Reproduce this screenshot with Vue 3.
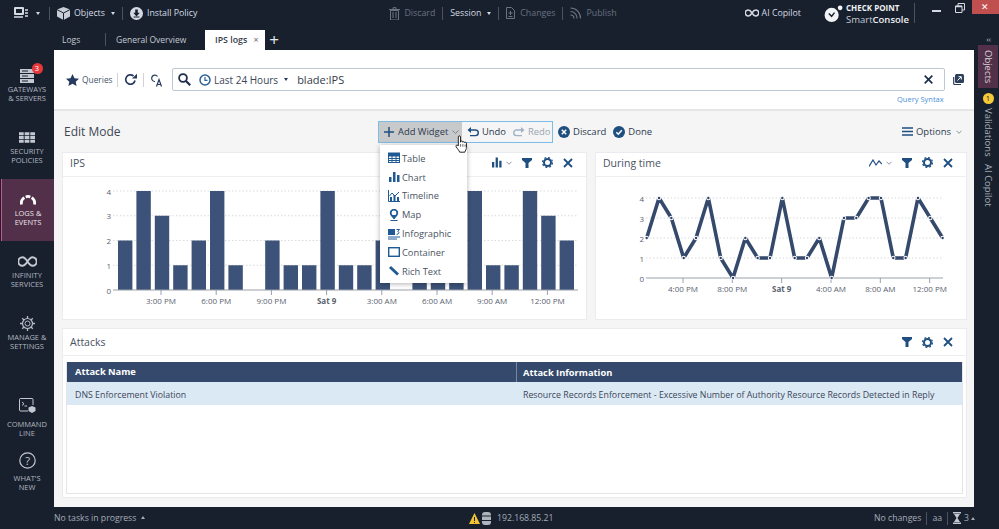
<template>
  <div class="app">
    <header class="topbar">
      <div class="top-group app-menu">
        <svg width="14" height="12" viewBox="0 0 14 12"><rect x="0" y="0" width="10" height="8" rx="1" fill="#d5dae2" /><rect x="2" y="2" width="6" height="4" fill="#18202e" /><path d="M0 10h9M11 3h3M11 6h3M11 9h3" stroke="#d5dae2" stroke-width="1.6" /></svg>
        <span class="caret"></span>
      </div>
      <i class="sep"></i>
      <div class="top-group">
        <svg width="13" height="13" viewBox="0 0 13 13"><path d="M6.5 0 13 2.6v7L6.5 13 0 9.6v-7z" fill="#c9ced6" /><path d="M0 2.6 6.5 6 13 2.6M6.5 6v7" stroke="#18202e" stroke-width="1" fill="none" /></svg>
        <span>Objects</span>
        <span class="caret"></span>
      </div>
      <i class="sep"></i>
      <div class="top-group">
        <svg width="13" height="13" viewBox="0 0 13 13"><circle cx="6.5" cy="6.5" r="6.5" fill="#d5dae2" /><path d="M5.2 2.5h2.6v3.2h2L6.5 9.4 3.2 5.7h2z" fill="#18202e" /><path d="M3.5 10h6" stroke="#18202e" /></svg>
        <span>Install Policy</span>
      </div>

      <div class="top-group muted discard-top">
        <svg width="11" height="13" viewBox="0 0 11 13"><path d="M0 2.5h11M4 2V.7h3V2M1.5 3.5h8V13h-8zM4 5v6M7 5v6" stroke="#6b7280" fill="none" /></svg>
        <span>Discard</span>
      </div>
      <i class="sep"></i>
      <div class="top-group session">
        <span>Session</span>
        <span class="caret"></span>
      </div>
      <i class="sep"></i>
      <div class="top-group muted">
        <svg width="9" height="12" viewBox="0 0 9 12"><path d="M.5.5h5l3 3v8h-8z" fill="none" stroke="#6b7280" /><path d="M2.5 6h4M4.5 4v4M2.5 9.500h4" stroke="#6b7280" /></svg>
        <span>Changes</span>
      </div>
      <i class="sep"></i>
      <div class="top-group muted">
        <svg width="11" height="12" viewBox="0 0 11 12"><path d="M.5 1a10 10 0 0 1 10 10.500M.5 4.500a6.500 6.500 0 0 1 6.500 7M.5 8a3.500 3.500 0 0 1 3.500 3.500" stroke="#6b7280" stroke-width="1.200" fill="none" /></svg>
        <span>Publish</span>
      </div>

      <div class="top-group copilot">
        <svg width="14" height="8" viewBox="0 0 14 8"><path d="M7 4C5.500 1.500 4.500 1 3.300 1a3 3 0 0 0 0 6C4.500 7 5.500 6.500 7 4c1.500-2.500 2.500-3 3.700-3a3 3 0 0 1 0 6C9.500 7 8.500 6.500 7 4z" fill="none" stroke="#d5dae2" stroke-width="1.500" /></svg>
        <span>AI Copilot</span>
      </div>
      <div class="brand">
        <svg width="20" height="17" viewBox="0 0 21 18"><circle cx="8" cy="10.500" r="7.500" fill="#f2f3f5" /><circle cx="17" cy="3" r="2.500" fill="#f2f3f5" /><path d="M5 9l3 3 3-4" stroke="#18202e" stroke-width="1.500" fill="none" /></svg>
        <div class="brand-text">
          <span class="brand-top">CHECK POINT</span>
          <span class="brand-bot">Smart<b>Console</b></span>
        </div>
      </div>
      <i class="sep brand-sep"></i>
      <div class="win-btns">
        <i class="win-min"></i>
        <svg width="10" height="10" viewBox="0 0 10 10"><path d="M.5 3h6.500v6.500H.5zM3 3V.5h6.500V7H7" fill="none" stroke="#d5dae2" /><path d="M.5 3.500h6.500" stroke="#d5dae2" stroke-width="1.500" /></svg>
        <div class="win-close">✕</div>
      </div>
    </header>

    <div class="tabs">
      <span class="tab tab-logs">Logs</span>
      <i class="sep tab-sep"></i>
      <span class="tab tab-overview">General Overview</span>
      <div class="tab-active">IPS logs <span class="tab-x">×</span></div>
      <span class="tab-plus">+</span>
      <span class="collapse">‹‹</span>
    </div>

    <div class="middle">
      <nav class="sidenav">
        <div
          v-for="item in navItems"
          :key="item.label1"
          class="nav-item"
          :class="[item.cls, { active: item.active }]"
        >
          <div class="nav-icon">
            <svg v-if="item.icon === 'gw'" width="14" height="14" viewBox="0 0 14 14"><rect y="0" width="14" height="4" fill="#c4c9d1" /><rect y="5" width="14" height="4" fill="#c4c9d1" /><rect y="10" width="14" height="4" fill="#c4c9d1" /><path d="M2 2h6M2 7h6M2 12h6" stroke="#18202e" /></svg>
            <svg v-else-if="item.icon === 'sec'" width="16" height="11" viewBox="0 0 17 11"><path d="M0 0h5v3H0zM6 0h5v3H6zM12 0h5v3h-5zM0 4h5v3H0zM6 4h5v3H6zM12 4h5v3h-5zM0 8h5v3H0zM6 8h5v3H6zM12 8h5v3h-5z" fill="#c4c9d1" /></svg>
            <svg v-else-if="item.icon === 'logs'" width="18" height="11" viewBox="0 0 18 12"><path d="M2 11.500A7 7 0 0 1 5 4" stroke="#fff" stroke-width="3" fill="none" /><path d="M6.500 3.200a7 7 0 0 1 5 0" stroke="#fff" stroke-width="3" fill="none" /><path d="M13 4a7 7 0 0 1 3 7.500" stroke="#fff" stroke-width="3" fill="none" /></svg>
            <svg v-else-if="item.icon === 'inf'" width="19" height="11" viewBox="0 0 19 11"><path d="M9.500 5.500C7.500 2.300 6 1.300 4.500 1.300a4.200 4.200 0 0 0 0 8.400c1.500 0 3-1 5-4.200s3.500-4.200 5-4.200a4.200 4.200 0 0 1 0 8.400c-1.500 0-3-1-5-4.200z" fill="none" stroke="#c4c9d1" stroke-width="2" /></svg>
            <svg v-else-if="item.icon === 'gear'" width="15" height="15" viewBox="0 0 15 15"><circle cx="7.500" cy="7.500" r="5" fill="none" stroke="#b5bbc4" stroke-width="1.200" /><circle cx="7.500" cy="7.500" r="2.500" fill="none" stroke="#b5bbc4" /><path d="M7.500 0v2.500M7.500 12.500V15M0 7.500h2.500M12.500 7.500H15M2.200 2.200 4 4M11 11l1.800 1.800M2.200 12.800 4 11M11 4l1.800-1.800" stroke="#b5bbc4" stroke-width="1.300" /></svg>
            <svg v-else-if="item.icon === 'cmd'" width="17" height="15" viewBox="0 0 17 15"><path d="M9 13H1.500a1 1 0 0 1-1-1V1.500a1 1 0 0 1 1-1H13a1 1 0 0 1 1 1V7" fill="none" stroke="#c4c9d1" /><path d="M3 4l2 1.800L3 7.500M5.500 8H8" stroke="#c4c9d1" fill="none" /><path d="M13 8l3.500 1.500v3.500L13 15l-3.500-2V9.500z" fill="#c4c9d1" /></svg>
            <svg v-else width="17" height="17" viewBox="0 0 17 17"><circle cx="8.500" cy="8.500" r="7.700" fill="none" stroke="#c4c9d1" stroke-width="1.200" /><text x="8.500" y="12.500" text-anchor="middle" class="q-mark">?</text></svg>
            <span v-if="item.badge" class="nav-badge">{{ item.badge }}</span>
          </div>
          <span>{{ item.label1 }}</span>
          <span>{{ item.label2 }}</span>
        </div>
      </nav>

      <main class="content">
        <section class="query-bar">
          <div class="query-row">
            <svg width="13" height="12" viewBox="0 0 13 12"><path d="M6.500 0l2 4.200 4.500.5-3.300 3 .9 4.300-4.100-2.200L2.400 12l.9-4.300L0 4.700l4.500-.5z" fill="#253a5e" /></svg>
            <span class="queries">Queries</span>
            <i class="sep-light"></i>
            <svg width="13" height="13" viewBox="0 0 13 13"><path d="M11 7.500A4.700 4.700 0 1 1 9.500 3" fill="none" stroke="#253a5e" stroke-width="1.700" /><path d="M8 5.500h5V.8z" fill="#253a5e" /></svg>
            <i class="sep-light"></i>
            <svg class="ca-icon" width="13" height="14" viewBox="0 0 13 14"><path d="M7.500 3.500A3.200 3.200 0 1 0 5 8.500" fill="none" stroke="#253a5e" stroke-width="1.200" /><path d="M6.500 13.500 9 6.500l2.500 7M7.300 11.500h3.400" fill="none" stroke="#253a5e" stroke-width="1.200" /></svg>
            <div class="search-box">
              <svg width="13" height="13" viewBox="0 0 13 13"><circle cx="5" cy="5" r="3.900" fill="none" stroke="#1d2f4d" stroke-width="1.800" /><path d="M8 8l4.200 4.200" stroke="#1d2f4d" stroke-width="2.200" /></svg>
              <svg class="clock" width="12" height="12" viewBox="0 0 12 12"><circle cx="6" cy="6" r="5" fill="none" stroke="#2a6099" stroke-width="1.500" /><path d="M6 3v3.300h2.500" fill="none" stroke="#2a6099" stroke-width="1.200" /></svg>
              <span class="range">Last 24 Hours</span>
              <span class="caret dark"></span>
              <span class="query-text">blade:IPS</span>
              <svg class="clear" width="9" height="9" viewBox="0 0 9 9"><path d="M.7.700l7.600 7.600M8.300.700 .7 8.300" stroke="#1d2f4d" stroke-width="1.700" /></svg>
            </div>
            <svg class="open-ext" width="11" height="11" viewBox="0 0 11 11"><rect x="2" y="0" width="9" height="9" rx="1.500" fill="#2e3f5c" /><path d="M.7 3v6.500a1 1 0 0 0 1 1H8" fill="none" stroke="#2e3f5c" stroke-width="1.200" /><path d="M4.500 6.500 8 3M5.500 2.700h2.800v2.800" stroke="#fff" fill="none" /></svg>
          </div>
          <a class="syntax">Query Syntax</a>
        </section>

        <section class="canvas">
          <div class="edit-row">
            <span class="edit-title">Edit Mode</span>
            <div class="edit-group">
              <button class="add-btn">
                <svg width="10" height="10" viewBox="0 0 10 10"><path d="M5 0v10M0 5h10" stroke="#1f4e80" stroke-width="1.500" /></svg>
                Add Widget
                <svg class="chev" width="7" height="4" viewBox="0 0 7 4"><path d="M.5.500l3 3 3-3" fill="none" stroke="#7a8594" /></svg>
              </button>
              <button class="hist-btn">
                <svg width="12" height="10" viewBox="0 0 12 10"><path d="M3 3h5.500a2.800 2.800 0 0 1 0 5.600H3" fill="none" stroke="#1f4e80" stroke-width="1.400" /><path d="M4 0 .5 3 4 6z" fill="#1f4e80" /></svg>
                Undo
              </button>
              <button class="hist-btn disabled">
                <svg width="12" height="10" viewBox="0 0 12 10"><path d="M9 3H3.500a2.800 2.800 0 0 0 0 5.600H9" fill="none" stroke="#9fb3c8" stroke-width="1.400" /><path d="M8 0l3.500 3L8 6z" fill="#9fb3c8" /></svg>
                Redo
              </button>
            </div>
            <button class="act-btn">
              <svg width="12" height="12" viewBox="0 0 12 12"><circle cx="6" cy="6" r="6" fill="#1f4e80" /><path d="M3.800 3.800l4.400 4.400M8.200 3.800 3.800 8.200" stroke="#fff" stroke-width="1.500" /></svg>
              Discard
            </button>
            <button class="act-btn">
              <svg width="12" height="12" viewBox="0 0 12 12"><circle cx="6" cy="6" r="6" fill="#1f4e80" /><path d="M3.300 6.200 5.300 8.200 8.800 4.200" stroke="#fff" stroke-width="1.500" fill="none" /></svg>
              Done
            </button>
            <button class="act-btn options">
              <svg width="11" height="9" viewBox="0 0 11 9"><path d="M0 1h11M0 4.500h11M0 8h11" stroke="#1f4e80" stroke-width="1.600" /></svg>
              Options
              <svg class="chev" width="6" height="4" viewBox="0 0 7 4"><path d="M.5.500l3 3 3-3" fill="none" stroke="#7a8594" /></svg>
            </button>
            <svg class="hand" width="17" height="19" viewBox="0 0 16 21"><path d="M4.500 12V2.200a1.200 1.200 0 0 1 2.400 0V8l.3-.8a1.100 1.100 0 0 1 2.100.4l.2.400a1 1 0 0 1 1.900.3l.2.300a1 1 0 0 1 1.900.4v4.500c0 2.500-1.300 3.500-1.800 5.500H6c-.6-1.800-2.500-3.800-4-6-.8-1.200.8-2.600 2-1.500z" fill="#fff" stroke="#111" stroke-width="1" /><path d="M7 10v3M9.500 10v3M12 10.500V13" stroke="#111" stroke-width=".7" /></svg>
          </div>

          <div class="widgets-row">
            <article class="widget ips">
              <div class="widget-head">
                <span>IPS</span>
                <div class="widget-tools">
                  <svg class="type-ic" width="10" height="11" viewBox="0 0 11 11"><path d="M0 5h2.500v6H0zM4 0h2.500v11H4zM8 3.500h2.500V11H8z" fill="#1f4e80" /></svg>
                  <svg class="chev" width="6" height="4" viewBox="0 0 7 4"><path d="M.5.500l3 3 3-3" fill="none" stroke="#7a8594" /></svg>
                  <svg class="tool" width="10" height="10" viewBox="0 0 10 10"><path d="M0 0h10v2L6.500 5v5h-3V5L0 2z" fill="#1f4e80" /></svg>
                  <svg class="tool" width="11" height="11" viewBox="0 0 11 11"><circle cx="5.500" cy="5.500" r="3.500" fill="none" stroke="#1f4e80" stroke-width="2" /><circle cx="5.500" cy="5.500" r="5" fill="none" stroke="#1f4e80" stroke-dasharray="2 1.930" stroke-width="1.200" /></svg>
                  <svg class="tool" width="10" height="10" viewBox="0 0 10 10"><path d="M1 1l8 8M9 1 1 9" stroke="#1f4e80" stroke-width="1.800" /></svg>
                </div>
              </div>
              <svg class="chart" width="523" height="143" viewBox="0 0 523 143">
                <g v-for="g in [0, 1, 2, 3, 4]" :key="g">
                  <line v-if="g" x1="50" :x2="515" :y1="barY(g)" :y2="barY(g)" class="grid" />
                  <text x="48" :y="barY(g) + 3.500" text-anchor="end" class="axis">{{ g }}</text>
                </g>
                <rect
                  v-for="(v, i) in series"
                  :key="i"
                  :x="55 + 18.4 * i"
                  :y="barY(v)"
                  width="14.400"
                  :height="112.500 - barY(v) + 0.500"
                  class="bar"
                />
                <line x1="50" x2="515" y1="113" y2="113" class="axis-line" />
                <g v-for="(t, i) in barTicks" :key="t">
                  <line :x1="98 + 55.2 * i" :x2="98 + 55.2 * i" y1="113" y2="118" class="axis-line" />
                  <text :x="98 + 55.2 * i" y="127" text-anchor="middle" class="axis" :class="{ strong: t === 'Sat 9' }">{{ t }}</text>
                </g>
              </svg>
            </article>

            <article class="widget during">
              <div class="widget-head">
                <span>During time</span>
                <div class="widget-tools">
                  <svg class="type-ic" width="13" height="8" viewBox="0 0 13 8"><path d="M0 7.500 4 1l3 5 3-4 3 3" fill="none" stroke="#1f4e80" stroke-width="1.200" /></svg>
                  <svg class="chev" width="6" height="4" viewBox="0 0 7 4"><path d="M.5.500l3 3 3-3" fill="none" stroke="#7a8594" /></svg>
                  <svg class="tool" width="10" height="10" viewBox="0 0 10 10"><path d="M0 0h10v2L6.500 5v5h-3V5L0 2z" fill="#1f4e80" /></svg>
                  <svg class="tool" width="11" height="11" viewBox="0 0 11 11"><circle cx="5.500" cy="5.500" r="3.500" fill="none" stroke="#1f4e80" stroke-width="2" /><circle cx="5.500" cy="5.500" r="5" fill="none" stroke="#1f4e80" stroke-dasharray="2 1.930" stroke-width="1.200" /></svg>
                  <svg class="tool" width="10" height="10" viewBox="0 0 10 10"><path d="M1 1l8 8M9 1 1 9" stroke="#1f4e80" stroke-width="1.800" /></svg>
                </div>
              </div>
              <svg class="chart" width="370" height="143" viewBox="0 0 370 143">
                <g v-for="g in [0, 1, 2, 3, 4]" :key="g">
                  <line v-if="g" x1="50" x2="346" :y1="lineY(g)" :y2="lineY(g)" class="grid" />
                  <text x="48" :y="lineY(g) + 3.500" text-anchor="end" class="axis">{{ g }}</text>
                </g>
                <line x1="50" x2="347" y1="101" y2="101" class="axis-line" />
                <g v-for="(t, i) in lineTicks" :key="t">
                  <line :x1="87 + 49.33 * i" :x2="87 + 49.33 * i" y1="101" y2="106" class="axis-line" />
                  <text :x="87 + 49.33 * i" y="115" text-anchor="middle" class="axis" :class="{ strong: t === 'Sat 9' }">{{ t }}</text>
                </g>
                <polyline :points="linePoints" class="trend" />
                <g v-for="(v, i) in series" :key="i">
                  <circle :cx="50.700 + 12.330 * i" :cy="lineY(v)" r="2.200" fill="#fff" />
                  <circle :cx="50.700 + 12.330 * i" :cy="lineY(v)" r="1.200" fill="#2f4468" />
                </g>
              </svg>
            </article>
          </div>

          <article class="widget attacks">
            <div class="widget-head">
              <span>Attacks</span>
              <div class="widget-tools">
                <svg class="tool" width="10" height="10" viewBox="0 0 10 10"><path d="M0 0h10v2L6.500 5v5h-3V5L0 2z" fill="#1f4e80" /></svg>
                <svg class="tool" width="11" height="11" viewBox="0 0 11 11"><circle cx="5.500" cy="5.500" r="3.500" fill="none" stroke="#1f4e80" stroke-width="2" /><circle cx="5.500" cy="5.500" r="5" fill="none" stroke="#1f4e80" stroke-dasharray="2 1.930" stroke-width="1.200" /></svg>
                <svg class="tool" width="10" height="10" viewBox="0 0 10 10"><path d="M1 1l8 8M9 1 1 9" stroke="#1f4e80" stroke-width="1.800" /></svg>
              </div>
            </div>
            <div class="table">
              <div class="t-row t-head">
                <div class="t-name">Attack Name</div>
                <div class="t-info">Attack Information</div>
              </div>
              <div class="t-row t-body">
                <div class="t-name">DNS Enforcement Violation</div>
                <div class="t-info">Resource Records Enforcement - Excessive Number of Authority Resource Records Detected in Reply</div>
              </div>
            </div>
          </article>

          <ul class="widget-menu">
            <li v-for="m in menuItems" :key="m.label">
              <svg width="12" height="12" viewBox="0 0 12 12" v-html="m.icon"></svg>
              {{ m.label }}
            </li>
          </ul>
        </section>
      </main>

      <aside class="rail">
        <div class="rail-tab active-tab">Objects</div>
        <div class="rail-badge">1</div>
        <div class="rail-tab">Validations</div>
        <div class="rail-tab">AI Copilot</div>
      </aside>
    </div>

    <footer class="statusbar">
      <span class="tasks">No tasks in progress <i class="tiny-up"></i></span>
      <div class="status-center">
        <svg width="11" height="11" viewBox="0 0 11 11"><path d="M5.500 0 11 11H0z" fill="#f1c232" /><path d="M5.500 4v4M5.500 9v1" stroke="#18202e" /></svg>
        <svg width="9" height="13" viewBox="0 0 9 13"><rect width="9" height="13" rx="3" fill="#aeb4bd" /><path d="M0 4h9M0 8.500h9" stroke="#18202e" /></svg>
        <span class="ip">192.168.85.21</span>
      </div>
      <div class="status-right">
        <span>No changes</span>
        <i class="sep"></i>
        <span>aa</span>
        <i class="sep"></i>
        <svg width="8" height="12" viewBox="0 0 8 12"><path d="M0 0h8v1.500H0zM0 10.500h8V12H0zM1 2h6L4.500 6 7 10H1l2.500-4z" fill="#c4c9d1" /></svg>
        <span>3</span>
        <i class="tiny-up"></i>
      </div>
    </footer>
  </div>
</template>

<script setup>
const series = [2, 4, 3, 1, 2, 4, 1, 0, 2, 1, 1, 4, 1, 1, 2, 0, 3, 3, 4, 4, 1, 1, 4, 3, 2];
const barTicks = ["3:00 PM", "6:00 PM", "9:00 PM", "Sat 9", "3:00 AM", "6:00 AM", "9:00 AM", "12:00 PM"];
const lineTicks = ["4:00 PM", "8:00 PM", "Sat 9", "4:00 AM", "8:00 AM", "12:00 PM"];

const barY = (v) => 113 - 24.75 * v;
const lineY = (v) => 101 - 20 * v;
const linePoints = series.map((v, i) => `${50.7 + 12.33 * i},${lineY(v)}`).join(" ");

const navItems = [
  { icon: "gw", label1: "GATEWAYS", label2: "& SERVERS", badge: 3, cls: "nav-gw" },
  { icon: "sec", label1: "SECURITY", label2: "POLICIES", cls: "nav-sec" },
  { icon: "logs", label1: "LOGS &", label2: "EVENTS", active: true, cls: "nav-logs" },
  { icon: "inf", label1: "INFINITY", label2: "SERVICES", cls: "nav-inf" },
  { icon: "gear", label1: "MANAGE &", label2: "SETTINGS", cls: "nav-gear" },
  { icon: "cmd", label1: "COMMAND", label2: "LINE", cls: "nav-cmd" },
  { icon: "q", label1: "WHAT'S", label2: "NEW", cls: "nav-new" },
];

const c = "#1f5a94";
const menuItems = [
  { label: "Table", icon: `<rect x=".5" y="1.500" width="11" height="9" fill="#fff" stroke="${c}"/><path d="M0 1h12v3H0zM.5 6.500h11M.5 8.500h11M4 4v6M8 4v6" stroke="${c}" fill="${c}"/>` },
  { label: "Chart", icon: `<path d="M1 6h2.500v5H1zM5 1h2.500v10H5zM9 4h2.500v7H9z" fill="${c}"/>` },
  { label: "Timeline", icon: `<path d="M.5 0v11.500H12" stroke="${c}" fill="none"/><path d="M2 11V7h2v4zM5.500 11V5h2v6zM9 11V7h2v4z" fill="${c}"/><path d="M1.500 6 4 3l3 3 4-4" stroke="${c}" fill="none"/>` },
  { label: "Map", icon: `<circle cx="6" cy="4" r="3.300" fill="none" stroke="${c}" stroke-width="1.800"/><path d="M3.500 6.500 6 10l2.500-3.500zM2.500 11.500h7" stroke="${c}" fill="${c}"/>` },
  { label: "Infographic", icon: `<path d="M0 1h7v6H0z" fill="${c}"/><path d="M0 9h12M0 11h9" stroke="${c}"/><path d="M8.500 1.500h3L9.800 3.500c1.500 0 1.800 3-1.300 2.800" stroke="${c}" fill="none"/>` },
  { label: "Container", icon: `<rect x=".7" y="1.700" width="10.600" height="8.600" fill="none" stroke="${c}" stroke-width="1.400"/>` },
  { label: "Rich Text", icon: `<path d="M1 3l2-2 8 7.500-2 2z" fill="${c}"/>` },
];
</script>

<style scoped>
.app {
  width: 999px;
  height: 529px;
  overflow: hidden;
  display: flex;
  flex-direction: column;
  background: #18202e;
  color: #333c4a;
  font-family: "Open Sans", "Noto Sans", sans-serif;
  font-size: 9.500px;
}

svg {
  flex: none;
  display: block;
}

.topbar {
  height: 26px;
  display: flex;
  align-items: center;
  color: #d5dae2;
  font-size: 8.800px;
  white-space: nowrap;
}

.top-group {
  display: flex;
  align-items: center;
  gap: 4px;
}

.app-menu {
  margin-left: 14px;
  gap: 6px;
  margin-right: 2px;
}

.sep {
  display: inline-block;
  width: 1px;
  height: 13px;
  background: #4a5361;
  margin: 0 7px;
  flex: none;
}

.caret {
  width: 0;
  height: 0;
  border-left: 2.500px solid transparent;
  border-right: 2.500px solid transparent;
  border-top: 3px solid #d5dae2;
  margin-left: 2px;
}

.caret.dark {
  border-top-color: #253a5e;
  margin-left: 6px;
}

.muted {
  color: #697280;
  gap: 5px;
}

.discard-top {
  margin-left: 192px;
  gap: 4px;
}

.session {
  color: #d5dae2;
}

.copilot {
  margin-left: 128px;
  gap: 3px;
}

.brand {
  margin-left: 23px;
  display: flex;
  align-items: center;
  gap: 2px;
}

.brand-text {
  display: flex;
  flex-direction: column;
  line-height: 12px;
  margin-top: 2px;
}

.brand-top {
  font-size: 8px;
  font-weight: 700;
  color: #eef0f3;
}

.brand-bot {
  font-size: 9.500px;
  color: #c4c9d1;
}

.brand-bot b {
  font-weight: 600;
  color: #eef0f3;
}

.brand-sep {
  height: 20px;
  margin: 0 0 0 5px;
}

.win-btns {
  flex: 1;
  display: flex;
  align-items: flex-start;
  height: 26px;
}

.win-min {
  width: 9px;
  height: 2px;
  background: #d5dae2;
  margin: 10px 14px 0 17px;
}

.win-btns svg {
  margin-top: 3px;
}

.win-close {
  flex: 1;
  height: 14px;
  margin-left: 7px;
  background: #c0504f;
  color: #fff;
  font-size: 9px;
  text-align: center;
  line-height: 14px;
}

.tabs {
  height: 24px;
  display: flex;
  align-items: flex-end;
  color: #c4c9d1;
  font-size: 8.500px;
  position: relative;
}

.tab {
  height: 20px;
  line-height: 20px;
}

.tab-logs {
  margin-left: 62px;
  width: 19px;
}

.tab-sep {
  margin: 0 10px 4px 24px;
}

.tab-overview {
  width: 70px;
  white-space: nowrap;
}

.tab-active {
  margin-left: 19px;
  width: 60px;
  height: 20px;
  padding-left: 10px;
  box-sizing: border-box;
  background: #fff;
  color: #333c4a;
  font-weight: 600;
  font-size: 8.800px;
  line-height: 20px;
  white-space: nowrap;
}

.tab-x {
  font-weight: 400;
  color: #667;
  margin-left: 4px;
}

.tab-plus {
  margin-left: 3px;
  width: 12px;
  color: #e5e8ec;
  font-size: 17px;
  line-height: 20px;
  height: 20px;
  text-align: center;
}

.collapse {
  position: absolute;
  right: 8px;
  bottom: 7px;
  font-size: 8px;
  line-height: 8px;
}

.middle {
  height: 457px;
  display: flex;
}

.sidenav {
  width: 54px;
  flex: none;
  padding-top: 5px;
  box-sizing: border-box;
}

.nav-item {
  height: 62px;
  box-sizing: border-box;
  padding-top: 11px;
  display: flex;
  flex-direction: column;
  align-items: center;
  color: #b0b6bf;
  font-size: 7.500px;
  line-height: 9.300px;
}

.nav-icon {
  position: relative;
  height: 19px;
  display: flex;
  align-items: center;
  justify-content: center;
}

.nav-item.active {
  background: #53304a;
  border-left: 1.500px solid #c9568f;
  margin-left: 1px;
  color: #e8e4e8;
}

.nav-cmd {
  margin-top: 20px;
}

.nav-cmd .nav-icon {
  margin-bottom: 5px;
}

.nav-new {
  padding-top: 4px;
}

.nav-new .nav-icon {
  margin-bottom: 4px;
}

.nav-badge {
  position: absolute;
  top: -3.500px;
  left: 11.500px;
  width: 11px;
  height: 11px;
  border-radius: 50%;
  background: #e5383b;
  color: #fff;
  font-size: 7.500px;
  line-height: 11px;
  text-align: center;
}

.q-mark {
  fill: #c4c9d1;
  font-size: 11px;
}

.content {
  width: 920px;
  flex: none;
  background: #f5f5f5;
  display: flex;
  flex-direction: column;
}

.query-bar {
  height: 61px;
  box-sizing: border-box;
  background: #fff;
  border-bottom: 2px solid #e6e6e6;
  padding: 18px 0 0 12px;
  flex: none;
}

.query-row {
  display: flex;
  align-items: center;
  height: 23px;
}

.queries {
  margin-left: 3px;
  width: 29px;
  font-size: 8.400px;
  color: #47566d;
}

.sep-light {
  width: 1px;
  height: 14px;
  background: #d0d4d9;
  margin: 0 6px;
  flex: none;
}

.search-box {
  margin-left: 9px;
  width: 773px;
  height: 23px;
  box-sizing: border-box;
  border: 1px solid #bcc8d3;
  border-radius: 2px;
  display: flex;
  align-items: center;
  padding-left: 5px;
}

.clock {
  margin-left: 8px;
}

.range {
  margin-left: 3px;
  font-size: 10px;
  color: #3b4656;
}

.query-text {
  margin-left: 9px;
  font-size: 11px;
  color: #333c4a;
}

.clear {
  margin-left: auto;
  margin-right: 11px;
}

.open-ext {
  margin-left: 8px;
}

.syntax {
  display: block;
  margin: 4px 0 0 831px;
  font-size: 7.500px;
  line-height: 9px;
  color: #4a90d9;
  white-space: nowrap;
}

.canvas {
  position: relative;
  flex: 1;
  padding: 0 7px 0 8px;
}

.edit-row {
  position: relative;
  height: 41px;
  display: flex;
  align-items: center;
}

.edit-title {
  width: 314px;
  margin-left: 2px;
  font-size: 12px;
  color: #3d4654;
}

button {
  font: inherit;
  border: none;
  background: none;
  padding: 0;
  color: #2c3a50;
  display: flex;
  align-items: center;
  gap: 3px;
}

.edit-group {
  width: 175px;
  height: 22px;
  box-sizing: border-box;
  border: 1px solid #7dbbe8;
  display: flex;
  align-items: stretch;
  font-size: 9.400px;
}

.add-btn {
  width: 83px;
  flex: none;
  background: #c8c9ca;
  padding-left: 5px;
  gap: 4px;
  white-space: nowrap;
}

.add-btn .chev {
  margin-left: 0;
}

.hist-btn {
  padding-left: 5px;
  margin-right: 2px;
  font-weight: 400;
}

.hist-btn.disabled {
  color: #9aa5b1;
}

.act-btn {
  margin-left: 5px;
  font-size: 9.500px;
  white-space: nowrap;
  gap: 3px;
  margin-right: 2px;
}

.options {
  margin-left: auto;
  margin-right: 5px;
}

.options .chev {
  margin-left: 2px;
}

.hand {
  position: absolute;
  left: 391px;
  top: 24px;
  z-index: 5;
}

.widgets-row {
  display: flex;
  gap: 8px;
  margin-bottom: 8px;
}

.widget {
  background: #fff;
  border: 1px solid #e9ebee;
  box-sizing: border-box;
}

.ips {
  width: 525px;
  height: 168px;
}

.during {
  width: 372px;
  height: 168px;
}

.widget-head {
  height: 24px;
  box-sizing: border-box;
  padding: 0 13px 4px 7px;
  border-bottom: 1px solid #eceef0;
  display: flex;
  align-items: center;
  justify-content: space-between;
  font-size: 10.500px;
  color: #4a5362;
}

.widget-tools {
  display: flex;
  align-items: center;
}

.chev {
  margin-left: 4px;
}

.tool {
  margin-left: 10px;
}

.axis {
  font-size: 8px;
  fill: #5a6270;
  font-family: "Open Sans", sans-serif;
}

.axis.strong {
  font-weight: 700;
}

.grid {
  stroke: #d8dadd;
  stroke-dasharray: 1.500 2;
}

.axis-line {
  stroke: #9aa0a8;
}

.bar {
  fill: #3c5278;
}

.trend {
  fill: none;
  stroke: #34496b;
  stroke-width: 3.600;
  stroke-linejoin: round;
}

.attacks {
  width: 905px;
  height: 170px;
}

.attacks .widget-head {
  height: 27px;
  padding-bottom: 0;
}

.table {
  margin: 6px 3px 0;
  height: 131px;
  border: 1px solid #e3e5e8;
  border-top: none;
}

.t-row {
  display: flex;
  align-items: center;
}

.t-name {
  width: 450px;
  padding-left: 8px;
  box-sizing: border-box;
  flex: none;
}

.t-info {
  padding-left: 6px;
  white-space: nowrap;
}

.t-head {
  height: 20px;
  background: #34496b;
  color: #fff;
  font-weight: 700;
  font-size: 9.300px;
}

.t-head .t-name {
  border-right: 1px solid #7688a3;
  height: 20px;
  line-height: 20px;
}

.t-body {
  height: 23px;
  padding-top: 2px;
  box-sizing: border-box;
  background: #dbe9f5;
  font-size: 8.800px;
  color: #3b4656;
}

.widget-menu {
  position: absolute;
  left: 326px;
  top: 34px;
  width: 87px;
  height: 138px;
  box-sizing: border-box;
  margin: 0;
  padding: 4px 0 0;
  list-style: none;
  background: #fff;
  box-shadow: 0 1px 5px rgba(0, 0, 0, 0.3);
  z-index: 3;
  font-size: 9.300px;
  color: #4a5362;
}

.widget-menu li {
  height: 18.800px;
  display: flex;
  align-items: center;
  gap: 2px;
  padding-left: 8px;
}

.rail {
  flex: 1;
  display: flex;
  flex-direction: column;
  align-items: center;
  padding-left: 3px;
  color: #a8aeb8;
  font-size: 9.500px;
}

.rail-tab {
  writing-mode: vertical-rl;
  width: 20px;
  display: flex;
  align-items: center;
  line-height: 20px;
  margin-bottom: 7px;
}

.active-tab {
  height: 43px;
  background: #53304a;
  color: #d8d0d6;
  justify-content: center;
  margin-bottom: 5px;
  margin-top: -5px;
}

.rail-badge {
  width: 11px;
  height: 11px;
  border-radius: 50%;
  background: #f6c93b;
  color: #222;
  font-size: 7.500px;
  line-height: 11px;
  text-align: center;
  margin-bottom: 4px;
}

.statusbar {
  flex: 1;
  display: flex;
  align-items: center;
  color: #a4abb6;
  font-size: 8.700px;
}

.tasks {
  width: 414px;
  margin-left: 54px;
}

.tiny-up {
  display: inline-block;
  width: 0;
  height: 0;
  border-left: 2px solid transparent;
  border-right: 2px solid transparent;
  border-bottom: 3px solid #a4abb6;
  margin-left: 2px;
  vertical-align: 2px;
}

.status-center {
  display: flex;
  align-items: center;
  gap: 2px;
  margin-left: 1px;
}

.ip {
  margin-left: 4px;
}

.status-right {
  margin-left: auto;
  margin-right: 24px;
  display: flex;
  align-items: center;
}

.status-right .sep {
  margin: 0 5px;
}

.status-right svg {
  margin-right: 3px;
}
</style>

<style>
html,
body {
  margin: 0;
  background: #18202e;
}
</style>
